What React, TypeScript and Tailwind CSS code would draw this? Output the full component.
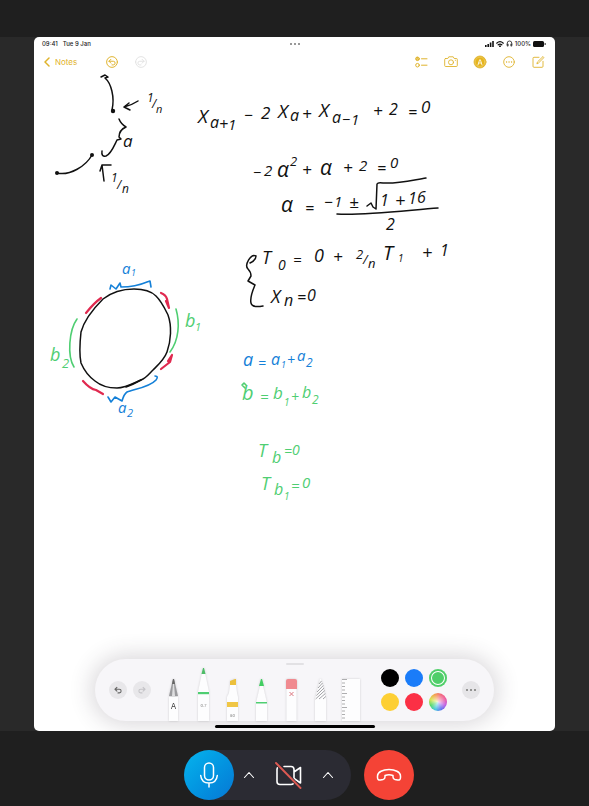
import type { ReactNode } from "react";

type Mark = [text: string, x: number, y: number, size: number];

const BLACK = "#111111";
const BLUE = "#1480d8";
const GREEN = "#4fce72";
const RED = "#e0294f";

const equations: { color: string; marks: Mark[] }[] = [
  { color: BLACK, marks: [["1", 147, 102, 12], ["/", 152, 108, 12], ["n", 156, 113, 11]] },
  { color: BLACK, marks: [["a", 123, 147, 17]] },
  { color: BLACK, marks: [["1", 111, 182, 12], ["/", 117, 189, 12], ["n", 122, 193, 12]] },
  {
    color: BLACK,
    marks: [
      ["X", 198, 123, 19], ["a", 210, 128, 16], ["+", 219, 130, 16], ["1", 228, 130, 15], ["−", 244, 121, 16],
      ["2", 261, 119, 17], ["X", 278, 118, 19], ["a", 290, 121, 16], ["+", 302, 120, 17],
      ["X", 319, 117, 19], ["a", 332, 123, 16], ["−", 342, 125, 15], ["1", 351, 125, 15],
      ["+", 373, 117, 17], ["2", 389, 115, 16], ["=", 408, 118, 16], ["0", 421, 113, 17],
    ],
  },
  {
    color: BLACK,
    marks: [
      ["−", 253, 178, 15], ["2", 264, 176, 15], ["α", 277, 177, 21], ["2", 290, 166, 13], ["+", 302, 176, 17],
      ["α", 320, 175, 21], ["+", 343, 174, 17], ["2", 359, 171, 15], ["=", 377, 174, 16], ["0", 390, 168, 15],
    ],
  },
  {
    color: BLACK,
    marks: [
      ["α", 281, 212, 21], ["=", 305, 214, 16], ["−", 324, 208, 16], ["1", 334, 207, 15], ["±", 349, 208, 17],
      ["1", 380, 206, 16], ["+", 395, 207, 18], ["1", 408, 204, 16], ["6", 417, 203, 16], ["2", 386, 230, 16],
    ],
  },
  {
    color: BLACK,
    marks: [
      ["T", 262, 264, 18], ["0", 278, 270, 14], ["=", 293, 265, 15], ["0", 314, 262, 18], ["+", 333, 263, 17],
      ["2", 356, 259, 13], ["/", 363, 264, 13], ["n", 368, 268, 13], ["T", 383, 260, 20], ["1", 398, 262, 10],
      ["+", 422, 259, 18], ["1", 440, 256, 16],
    ],
  },
  { color: BLACK, marks: [["X", 271, 303, 18], ["n", 284, 306, 16], ["=", 297, 303, 16], ["0", 307, 301, 16]] },
  { color: BLUE, marks: [["a", 122, 274, 15], ["1", 131, 276, 9]] },
  { color: BLUE, marks: [["a", 118, 413, 15], ["2", 127, 417, 11]] },
  { color: GREEN, marks: [["b", 185, 327, 18], ["1", 195, 331, 11]] },
  { color: GREEN, marks: [["b", 50, 361, 18], ["2", 62, 368, 13]] },
  {
    color: BLUE,
    marks: [
      ["a", 243, 366, 18], ["=", 258, 368, 14], ["a", 271, 365, 16], ["1", 281, 368, 9],
      ["+", 287, 365, 14], ["a", 297, 361, 15], ["2", 306, 367, 12],
    ],
  },
  {
    color: GREEN,
    marks: [
      ["b", 242, 400, 20], ["=", 260, 402, 15], ["b", 273, 399, 17], ["1", 284, 406, 10],
      ["+", 291, 402, 14], ["b", 302, 398, 16], ["2", 312, 404, 12],
    ],
  },
  { color: GREEN, marks: [["T", 258, 457, 18], ["b", 272, 463, 16], ["=", 284, 456, 14], ["0", 292, 455, 14]] },
  { color: GREEN, marks: [["T", 261, 490, 18], ["b", 274, 495, 16], ["1", 284, 500, 10], ["=", 291, 491, 15], ["0", 302, 488, 15]] },
];

const strokes: { color: string; width: number; paths: string[] }[] = [
  {
    color: BLACK,
    width: 1.5,
    paths: [
      "M101 77l4-2 3 2-3 1C111 83 115 97 112 110",
      "M138 101Q132 105 124 107M129 103l-5 4 6 3",
      "M119 119Q121 124 126 127Q119 130 119 137l2 2-4 1C114 146 111 154 106 156Q101 157 102 151",
      "M57 173C70 176 86 166 92 155",
      "M104 181L102 165M100 171l2-6 9 0",
      "M134 289C143 289 151 291 156 296C162 302 165 309 168 315C172 326 171 341 167 352C164 360 158 365 153 370C148 375 146 378 141 380C132 384 125 388 117 388C109 388 101 386 95 381C88 376 84 370 81 363C79 353 80 341 81 332C84 321 94 308 103 299C112 292 123 289 134 289Z",
      "M126 387Q134 384 141 380",
      "M367 206l4-3 2 4 3 2L377 184Q378 182 383 183C398 184 413 180 426 178",
      "M337 214C360 216 410 210 438 208",
      "M250 263Q256 260 256 256C251 253 244 265 248 269Q251 272 251 276L248 281L255 285C252 292 250 299 251 303Q252 308 263 306",
    ],
  },
  {
    color: RED,
    width: 2.2,
    paths: [
      "M86 313Q94 303 101 298",
      "M161 293Q166 295 167 299L169 308L166 301",
      "M172 355L170 362L161 369M172 355L168 361",
      "M83 381Q90 389 96 390L103 394",
    ],
  },
  { color: GREEN, width: 1.6, paths: ["M77 319C69 330 67 356 74 367", "M176 309C180 323 179 340 170 352", "M245 388l-3-3 2-2 2 2"] },
  {
    color: BLUE,
    width: 1.6,
    paths: [
      "M110 289L111 285L116 289L120 283L121 287C129 287 140 285 147 282L150 281L151 287",
      "M108 397L111 402L115 397L122 401Q124 394 127 392C135 389 150 387 156 380Q159 376 155 376",
    ],
  },
];

function NoteCanvas() {
  return (
    <svg
      viewBox="34 74 521 575"
      className="block w-full overflow-visible"
      role="img"
      aria-label="Handwritten note"
      fill="none"
      strokeLinecap="round"
      strokeLinejoin="round"
    >
      {strokes.map((s) => (
        <g key={s.color} stroke={s.color} strokeWidth={s.width}>
          {s.paths.map((d) => (
            <path key={d} d={d} />
          ))}
        </g>
      ))}
      <g fill={BLACK}>
        <circle cx="113" cy="111" r="2.2" />
        <circle cx="92" cy="155" r="2" />
        <circle cx="57" cy="173" r="2" />
      </g>
      {equations.map((eq, i) => (
        <text key={i} fill={eq.color} className="font-['Open_Sans',sans-serif] font-medium italic">
          {eq.marks.map(([text, x, y, size]) => (
            <tspan key={`${x}-${y}`} x={x} y={y} fontSize={size}>
              {text}
            </tspan>
          ))}
        </text>
      ))}
    </svg>
  );
}

function IconButton({ label, className, children }: { label: string; className?: string; children: ReactNode }) {
  return (
    <button type="button" aria-label={label} className={`flex shrink-0 items-center justify-center ${className ?? ""}`}>
      {children}
    </button>
  );
}

const line = { fill: "none", stroke: "currentColor", strokeLinecap: "round", strokeLinejoin: "round" } as const;

function UndoGlyph() {
  return <path d="M5.500 4L3.700 5.800l1.800 1.800M3.700 5.800h4a1.700 1.700 0 0 1 0 3.400H6.500" />;
}

function StatusBar() {
  return (
    <div className="relative flex h-[13px] items-center justify-between pr-[9px] pl-2 text-[6px] font-medium text-[#222]">
      <div className="flex gap-[5px]">
        <span>09:41</span>
        <span>Tue 9 Jan</span>
      </div>
      <div className="absolute inset-x-0 flex justify-center gap-[2px]">
        <i className="size-[2px] rounded-full bg-[#777]" />
        <i className="size-[2px] rounded-full bg-[#777]" />
        <i className="size-[2px] rounded-full bg-[#777]" />
      </div>
      <div className="flex items-center gap-[2px]">
        <svg viewBox="0 0 9 6" className="h-[6px] w-[9px]" fill="#111">
          <path d="M0 4h1.600v2H0zM2.400 3H4v3H2.400zM4.800 1.600h1.600V6H4.800zM7.200 0h1.600v6H7.200z" />
        </svg>
        <svg viewBox="0 0 8 6" className="h-[6px] w-[8px]" {...line} stroke="#111" strokeWidth="1.200">
          <path d="M.7 2.200Q4-.800 7.300 2.200M2.200 3.800Q4 2.300 5.800 3.800" />
          <circle cx="4" cy="5.200" r=".4" />
        </svg>
        <svg viewBox="0 0 7 7" className="size-[7px]" {...line} stroke="#333" strokeWidth=".9">
          <path d="M1.200 5V3.300a2.300 2.300 0 0 1 4.600 0V5M1.300 4.300v1.800h.8V4.300zM5.700 4.300v1.800h-.8V4.300z" />
        </svg>
        <span>100%</span>
        <svg viewBox="0 0 13 6" className="h-[6px] w-[13px]" fill="#111">
          <rect width="11" height="6" rx="1.500" />
          <rect x="11.600" y="2" width="1" height="2" rx=".5" />
        </svg>
      </div>
    </div>
  );
}

function NoteToolbar() {
  return (
    <nav className="flex h-6 items-center pr-[10px] pl-[10px] text-[#dfb32c]">
      <a href="#notes" className="flex w-[61px] items-center gap-[5px] text-[8px]">
        <svg viewBox="0 0 6 10" className="h-[10px] w-[6px]" {...line} strokeWidth="1.500">
          <path d="M5 1L1 5l4 4" />
        </svg>
        Notes
      </a>
      <div className="flex gap-[15px]">
        <IconButton label="Undo">
          <svg viewBox="0 0 13 13" className="size-[14px]" {...line} strokeWidth=".9">
            <circle cx="6.500" cy="6.500" r="5" />
            <UndoGlyph />
          </svg>
        </IconButton>
        <IconButton label="Redo" className="text-[#e2e2e2]">
          <svg viewBox="0 0 13 13" className="size-[14px] -scale-x-100" {...line} strokeWidth=".9">
            <circle cx="6.500" cy="6.500" r="5" />
            <UndoGlyph />
          </svg>
        </IconButton>
      </div>
      <div className="ml-auto flex gap-[15px]">
        <IconButton label="Checklist">
          <svg viewBox="0 0 14 14" className="size-[14px]" {...line} strokeWidth="1">
            <circle cx="2.500" cy="3.800" r="1.800" fill="currentColor" />
            <path d="M1.700 3.800l.7.6 1-1.300" stroke="#fff" strokeWidth=".5" />
            <circle cx="2.500" cy="10.200" r="1.800" />
            <path d="M6.500 3.800h5.500M6.500 10.200h5.500" />
          </svg>
        </IconButton>
        <IconButton label="Camera">
          <svg viewBox="0 0 14 14" className="size-[14px]" {...line} strokeWidth=".9">
            <path d="M1.600 3.500h2.200l1-1.700h4.400l1 1.700h2.200q.9 0 .9.900v6.200q0 .9-.9.900H1.600q-.9 0-.9-.9V4.400q0-.9.900-.9z" />
            <circle cx="7" cy="7.300" r="2.500" />
            <path d="M11.300 5.300h.2" />
          </svg>
        </IconButton>
        <IconButton label="Markup">
          <svg viewBox="0 0 14 14" className="size-[14px]" {...line} strokeWidth=".8">
            <circle cx="7" cy="7" r="6" fill="#e5b41d" />
            <circle cx="7" cy="7" r="4.900" stroke="#f3d98a" strokeWidth=".5" />
            <path d="M5 10L6.600 4.800h.8L9 10M5.700 8h2.600" stroke="#fff" />
          </svg>
        </IconButton>
        <IconButton label="More options">
          <svg viewBox="0 0 14 14" className="size-[14px]" {...line} strokeWidth=".9">
            <circle cx="7" cy="7" r="5.300" />
            <path d="M4.500 7h.1M7 7h.1M9.500 7h.1" strokeWidth="1.300" />
          </svg>
        </IconButton>
        <IconButton label="New note">
          <svg viewBox="0 0 14 14" className="size-[14px]" {...line} strokeWidth=".9">
            <path d="M8 2.300H3q-1 0-1 1v8q0 1 1 1h8q1 0 1-1V6.300M6 8.500l.4-1.500L12 1.500l1 1L7.500 8z" />
          </svg>
        </IconButton>
      </div>
    </nav>
  );
}

function Tool({ label, children }: { label: string; children: ReactNode }) {
  return (
    <button type="button" aria-label={label} className="min-w-0 flex-1">
      <svg viewBox="0 0 29 62" className="mx-auto h-[62px] w-[29px] drop-shadow-[0_0_1px_rgba(0,0,0,0.16)]">
        {children}
      </svg>
    </button>
  );
}

const swatches = [
  { name: "Black", className: "bg-black" },
  { name: "Blue", className: "bg-[#1a7cf9]" },
  { name: "Green", className: "bg-[#4fce69] shadow-[inset_0_0_0_2px_#4fce69,inset_0_0_0_3px_#fff]" },
  { name: "Yellow", className: "bg-[#fdcf34]" },
  { name: "Red", className: "bg-[#fb3045]" },
  {
    name: "Custom colour",
    className:
      "bg-[radial-gradient(circle,#ffffffcc_0%,#ffffff00_65%),conic-gradient(from_20deg,#f2667a,#ee5a9c,#c35be0,#5e6ff0,#45c8e0,#52d869,#d7e34c,#f4a04c,#f2667a)]",
  },
];

function Palette() {
  const pen = "#fdfdfe";
  return (
    <section aria-label="Drawing tools" className="relative px-[61px] pt-[10px] pb-[10px]">
      <div className="relative flex h-[62px] items-center rounded-full bg-[#f7f6f9] pr-[14px] pl-[14px] shadow-[0_0_22px_4px_rgba(60,50,65,0.19)]">
        <i className="absolute top-1 left-1/2 h-[2px] w-[18px] -translate-x-1/2 rounded-full bg-[#e2e1e4]" />
        <div className="flex gap-[6px]">
          <IconButton label="Undo stroke" className="size-[18px] rounded-full bg-[#e8e7ea] text-[#666]">
            <svg viewBox="0 0 13 13" className="size-[14px]" {...line} strokeWidth="1">
              <UndoGlyph />
            </svg>
          </IconButton>
          <IconButton label="Redo stroke" className="size-[18px] rounded-full bg-[#e8e7ea] text-[#c5c4c8]">
            <svg viewBox="0 0 13 13" className="size-[14px] -scale-x-100" {...line} strokeWidth="1">
              <UndoGlyph />
            </svg>
          </IconButton>
        </div>
        <div className="ml-2 flex flex-1">
          <Tool label="Handwriting pen">
            <path d="M10 38h9v24h-9z" fill={pen} />
            <path d="M14 20h1l4 17h-9z" fill="#9a9a9d" />
            <path d="M14 25h1l1 12h-3z" fill="#dedee0" />
            <path d="M14 20h1l1 5h-3z" fill="#666" />
            <text x="14.500" y="50" textAnchor="middle" fontSize="8" fill="#444">A</text>
          </Tool>
          <Tool label="Pen">
            <path d="M13 14h3l4 19v29H9V33z" fill={pen} />
            <path d="M14 9h1l1.500 6h-4z" fill="#4fbd68" />
            <path d="M9 33h11v2.200H9z" fill="#4fce72" />
            <text x="14.500" y="48" textAnchor="middle" fontSize="4" fill="#777">0.7</text>
          </Tool>
          <Tool label="Highlighter">
            <path d="M12 26h6l1 8 1 4v24H9V38l2-4z" fill={pen} />
            <path d="M12 22l5-2h1v6h-6z" fill="#ecc03c" />
            <path d="M9 43h11v5H9z" fill="#f0c645" />
            <text x="14.500" y="58" textAnchor="middle" fontSize="4" fill="#777">80</text>
          </Tool>
          <Tool label="Pencil">
            <path d="M13 27h3l4 17v18H9V44z" fill={pen} />
            <path d="M14 20h1l2 7h-5z" fill="#43ce62" />
            <path d="M9 43h11v1.500H9z" fill="#4fce72" />
          </Tool>
          <Tool label="Eraser">
            <path d="M9.500 29h10v33h-10z" fill={pen} />
            <path d="M9 22q0-2 2-2h7q2 0 2 2v8H9z" fill="#f08a90" />
            <path d="M12.500 33l4 4m0-4l-4 4" stroke="#dc7880" />
          </Tool>
          <Tool label="Lasso">
            <path d="M14 20h1l5 20v22H9V40z" fill={pen} />
            <path d="M13 25l2.500-3M12 29l4.500-5M11 33l6.300-6.500M10.300 36.500l7.800-7.500M9.600 40l9.200-8.500M13 40l6.400-5.500M17 40l2.800-2.500" stroke="#8c8c90" strokeWidth=".8" />
          </Tool>
          <Tool label="Ruler">
            <path d="M6 20h18v42H6z" fill={pen} />
            <path d="M6 20.500h5M6 24h3M6 27.500h3M6 31h3M6 34.500h5M6 38h3M6 41.500h3M6 45h3M6 48.500h5M6 52h3M6 55.500h3M6 59h3" stroke="#99999c" strokeWidth=".8" />
          </Tool>
        </div>
        <div className="mr-[15px] ml-4 grid grid-cols-3 gap-[6px]">
          {swatches.map((s) => (
            <button key={s.name} type="button" aria-label={s.name} className={`size-[18px] rounded-full ${s.className}`} />
          ))}
        </div>
        <IconButton label="More tools" className="size-[18px] gap-[2px] rounded-full bg-[#e6e5e8]">
          <i className="size-[2px] rounded-full bg-[#777]" />
          <i className="size-[2px] rounded-full bg-[#777]" />
          <i className="size-[2px] rounded-full bg-[#777]" />
        </IconButton>
      </div>
      <i className="absolute bottom-[3px] left-1/2 h-[3px] w-40 -translate-x-1/2 rounded-full bg-black" />
    </section>
  );
}

function Chevron() {
  return (
    <svg viewBox="0 0 12 8" className="h-2 w-3" {...line} strokeWidth="1.100">
      <path d="M1.500 6.500L6 1.500l4.500 5" />
    </svg>
  );
}

function CallControls() {
  return (
    <footer className="flex justify-center gap-[13px] bg-[#1f1f1f] pt-[19px] pb-[6px] pl-[9px] text-white">
      <div className="flex h-[50px] items-stretch rounded-full bg-[#2b2b33] pr-[9px]">
        <IconButton label="Mute microphone" className="size-[50px] rounded-full bg-linear-135 from-[#08b4ed] to-[#0877d4]">
          <svg viewBox="0 0 20 28" className="h-7 w-5" {...line} strokeWidth="1.500">
            <rect x="5.500" y="2" width="9" height="17" rx="4.500" />
            <path d="M1.700 14.500c.5 5 3.800 7.500 8.300 7.500s7.800-2.500 8.300-7.500M10 22v4" />
          </svg>
        </IconButton>
        <IconButton label="Microphone options" className="w-[29px]">
          <Chevron />
        </IconButton>
        <IconButton label="Start video" className="w-[50px]">
          <svg viewBox="0 0 28 28" className="size-7" {...line} strokeWidth="1.600">
            <path d="M10 5.500h7q3 0 3 3v12q0 3-3 3H6q-3 0-3-3v-12q0-1.500 1-2.300M20 11l6.500-4.500V22L20 17.500" />
            <path d="M2 2l24.500 25" stroke="#2b2b33" strokeWidth="3.500" />
            <path d="M2 2l24.500 25" stroke="#dc5952" strokeWidth="1.900" />
          </svg>
        </IconButton>
        <IconButton label="Video options" className="w-[29px]">
          <Chevron />
        </IconButton>
      </div>
      <IconButton label="End call" className="size-[50px] rounded-full bg-[#f44336]">
        <svg viewBox="0 0 26 14" className="h-[14px] w-[26px]" {...line} strokeWidth="1.500">
          <path d="M1.500 8C1.500 4 7 1.500 13 1.500S24.500 4 24.500 8v1.500q0 3-3 2.500l-2.500-.5q-2-.5-2-2.500V7.500Q13 6 9 7.500V9q0 2-2 2.500L4.500 12q-3 .5-3-2.500z" />
        </svg>
      </IconButton>
    </footer>
  );
}

export default function App() {
  return (
    <div className="flex min-h-screen flex-col bg-[#292929] font-['Inter',sans-serif]">
      <div className="h-[37px] bg-[#1f1f1f]" />
      <main className="mx-[34px] flex flex-1 flex-col overflow-hidden rounded-[5px] bg-white">
        <StatusBar />
        <NoteToolbar />
        <NoteCanvas />
        <div className="mt-auto">
          <Palette />
        </div>
      </main>
      <CallControls />
    </div>
  );
}
